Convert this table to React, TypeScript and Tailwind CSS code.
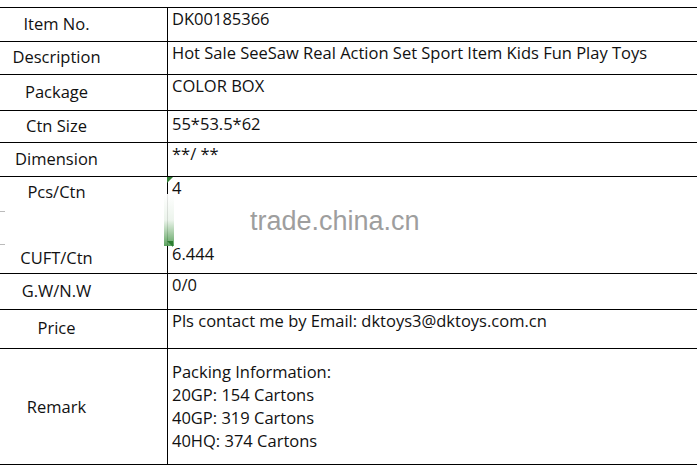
const font = { fontFamily: '"Open Sans", "Noto Sans", sans-serif' };

type Row = {
  label: string;
  value: string[];
  h: string;
  pt: string;
};

const rows: Row[] = [
  { label: "Item No.", value: ["DK00185366"], h: "h-[34px]", pt: "pt-0" },
  {
    label: "Description",
    value: ["Hot Sale SeeSaw Real Action Set Sport Item Kids Fun Play Toys"],
    h: "h-[33px]",
    pt: "pt-0",
  },
  { label: "Package", value: ["COLOR BOX"], h: "h-[36px]", pt: "pt-0" },
  { label: "Ctn Size", value: ["55*53.5*62"], h: "h-[32px]", pt: "pt-[2px]" },
  { label: "Dimension", value: ["**/ **"], h: "h-[34px]", pt: "pt-0" },
];

const rowsAfter: Row[] = [
  { label: "G.W/N.W", value: ["0/0"], h: "h-[36px]", pt: "pt-0" },
  {
    label: "Price",
    value: ["Pls contact me by Email: dktoys3@dktoys.com.cn"],
    h: "h-[39px]",
    pt: "pt-0",
  },
];

function TableRow({ row }: { row: Row }) {
  return (
    <div className={`flex border-t border-black ${row.h}`}>
      <div className="flex w-[168px] shrink-0 items-center border-r border-black">
        <span className="block w-[113px] pb-[3px] text-center">{row.label}</span>
      </div>
      <div className={`pl-[4px] ${row.pt}`}>
        {row.value.map((v) => (
          <div key={v}>{v}</div>
        ))}
      </div>
    </div>
  );
}

export default function App() {
  return (
    <div
      className="relative h-[470px] w-[697px] overflow-hidden bg-white pt-[7px] text-[16.5px] leading-[21px] text-[#111]"
      style={font}
    >
      {rows.map((r) => (
        <TableRow key={r.label} row={r} />
      ))}

      {/* Pcs/Ctn + CUFT/Ctn block, middle line hidden under the watermark */}
      <div className="relative flex h-[97px] border-t border-black">
        <div className="flex w-[168px] shrink-0 flex-col justify-between border-r border-black pb-[5px] pt-[4px]">
          <span className="block w-[113px] text-center">Pcs/Ctn</span>
          <span className="block w-[113px] text-center">CUFT/Ctn</span>
        </div>
        <div className="flex flex-col justify-between pb-[9px] pl-[4px] pt-0">
          <span>4</span>
          <span>6.444</span>
        </div>
        <div className="absolute left-[167px] top-0 h-0 w-0 border-r-[6px] border-t-[6px] border-r-transparent border-t-[#2e7d32]" />
        <div className="absolute left-[164px] top-[17px] h-[52px] w-[10px] bg-gradient-to-b from-white via-[#eaf3ea] to-[#4a9a4f] opacity-90" />
        <div className="absolute left-[167px] top-[64px] h-0 w-0 border-b-[6px] border-r-[6px] border-b-transparent border-r-[#2e7d32]" />
        <div className="absolute left-0 top-[34px] h-px w-[5px] bg-[#bbb]" />
        <div className="absolute left-0 top-[67px] h-px w-[5px] bg-[#bbb]" />
      </div>

      {rowsAfter.map((r) => (
        <TableRow key={r.label} row={r} />
      ))}

      <div className="flex h-[117px] border-y border-black">
        <div className="flex w-[168px] shrink-0 items-center border-r border-black">
          <span className="block w-[113px] text-center">Remark</span>
        </div>
        <div className="pl-[4px] pt-[11px] leading-[23px]">
          <div>Packing Information:</div>
          <div>20GP: 154 Cartons</div>
          <div>40GP: 319 Cartons</div>
          <div>40HQ: 374 Cartons</div>
        </div>
      </div>

      <div
        className="absolute left-[250px] top-[204px] text-[27px] leading-[34px] text-[#9e9e9e]"
        style={{ fontFamily: '"Liberation Sans", Arial, sans-serif' }}
      >
        trade.china.cn
      </div>
    </div>
  );
}
